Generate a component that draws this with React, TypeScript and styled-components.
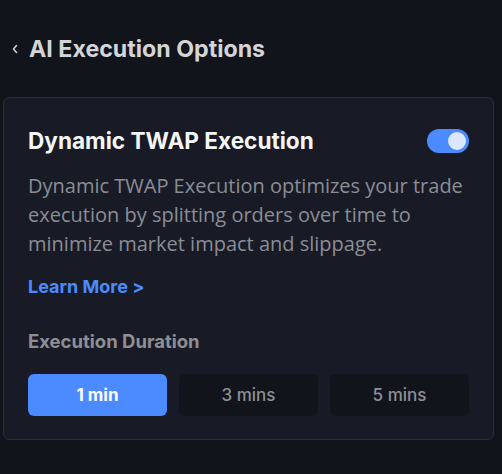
import { useState } from 'react';
import styled, { createGlobalStyle } from 'styled-components';

const GlobalStyle = createGlobalStyle`
  html, body {
    margin: 0;
    background: #11141b;
  }
  body {
    font-family: Inter, Roboto, 'Liberation Sans', sans-serif;
  }
`;

const durations = ['1 min', '3 mins', '5 mins'];

const App: React.FC = () => {
  const [enabled, setEnabled] = useState(true);
  const [duration, setDuration] = useState('1 min');

  return (
    <Page>
      <GlobalStyle />
      <Header>
        <BackIcon viewBox='0 0 8 12' aria-hidden>
          <path d='M5.5 2.5 2.5 6l3 3.5' />
        </BackIcon>
        <HeaderTitle>AI Execution Options</HeaderTitle>
      </Header>
      <Card>
        <TitleRow>
          <CardTitle>Dynamic TWAP Execution</CardTitle>
          <Toggle $on={enabled} onClick={() => setEnabled(!enabled)}>
            <Knob $on={enabled} />
          </Toggle>
        </TitleRow>
        <Description>
          Dynamic TWAP Execution optimizes your trade execution by splitting
          orders over time to minimize market impact and slippage.
        </Description>
        <LearnMore href='#'>Learn More &gt;</LearnMore>
        <SectionLabel>Execution Duration</SectionLabel>
        <Options>
          {durations.map((d) => (
            <Option
              key={d}
              $active={d === duration}
              onClick={() => setDuration(d)}
            >
              {d}
            </Option>
          ))}
        </Options>
      </Card>
    </Page>
  );
};

const Page = styled.div`
  min-height: 474px;
  padding: 0 8px 0 3px;
  box-sizing: border-box;
`;

const Header = styled.div`
  display: flex;
  align-items: center;
  gap: 10px;
  height: 97px;
  padding-left: 8px;
  box-sizing: border-box;
`;

const BackIcon = styled.svg`
  width: 8px;
  height: 12px;
  fill: none;
  stroke: #d4d5d9;
  stroke-width: 1.5;
  stroke-linecap: round;
  stroke-linejoin: round;
`;

const HeaderTitle = styled.h1`
  margin: 0;
  font-size: 23.2px;
  line-height: 28px;
  font-weight: 700;
  color: #d4d5d9;
`;

const Card = styled.div`
  background: #181b25;
  border: 1px solid #2a2d37;
  border-radius: 6px;
  padding: 30px 24px 23px;
`;

const TitleRow = styled.div`
  display: flex;
  align-items: center;
  justify-content: space-between;
`;

const CardTitle = styled.h2`
  margin: 0;
  font-size: 22.6px;
  line-height: 26px;
  font-weight: 700;
  color: #f4f5f7;
`;

const Toggle = styled.button<{ $on: boolean }>`
  width: 42px;
  height: 24px;
  border: none;
  border-radius: 12px;
  padding: 3px;
  display: flex;
  justify-content: ${(p) => (p.$on ? 'flex-end' : 'flex-start')};
  background: ${(p) => (p.$on ? '#4b8bff' : '#3a3d47')};
  cursor: pointer;
`;

const Knob = styled.span<{ $on: boolean }>`
  width: 18px;
  height: 18px;
  border-radius: 50%;
  background: ${(p) => (p.$on ? '#dde6ff' : '#9a9ca4')};
`;

const Description = styled.p`
  margin: 17px 0 0;
  font-family: 'Open Sans', sans-serif;
  font-size: 20px;
  line-height: 29px;
  color: #8b8d95;
`;

const LearnMore = styled.a`
  display: inline-block;
  margin-top: 17px;
  font-size: 18px;
  line-height: 24px;
  font-weight: 700;
  color: #4a8cff;
  text-decoration: none;
`;

const SectionLabel = styled.div`
  margin-top: 30px;
  font-size: 18.5px;
  line-height: 24px;
  font-weight: 700;
  color: #8e8f95;
`;

const Options = styled.div`
  display: grid;
  grid-template-columns: repeat(3, 1fr);
  gap: 12px;
  margin-top: 21px;
`;

const Option = styled.button<{ $active: boolean }>`
  height: 42px;
  border: none;
  border-radius: 6px;
  font-family: Inter, Roboto, sans-serif;
  font-size: 17px;
  font-weight: ${(p) => (p.$active ? 700 : 500)};
  color: ${(p) => (p.$active ? '#ffffff' : '#8e8f95')};
  background: ${(p) => (p.$active ? '#4b8bff' : '#12141b')};
  cursor: pointer;
`;

export default App;
